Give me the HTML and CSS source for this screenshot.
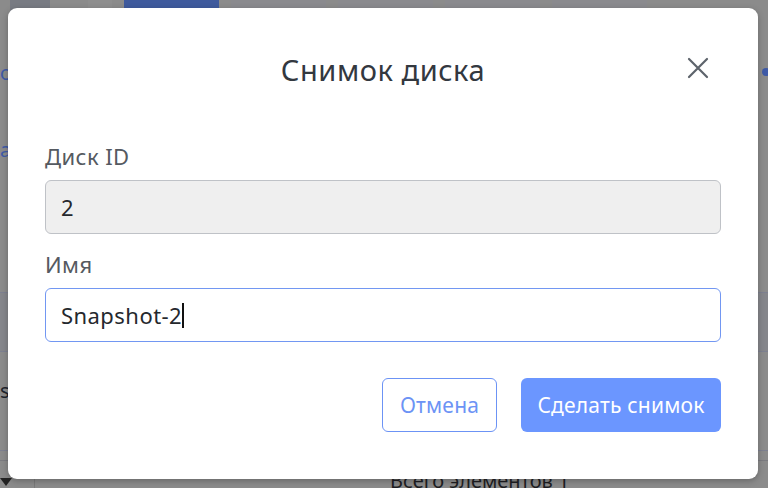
FILE: index.html
```html
<!DOCTYPE html>
<html lang="ru">
<head>
<meta charset="utf-8">
<link rel="stylesheet" href="styles.css">
</head>
<body>
<div class="page">
  <div class="topbar">
    <span class="seg s1"></span><span class="seg s2"></span><span class="seg s3"></span><span class="seg s4"></span><span class="seg s5"></span><span class="seg s6"></span><span class="seg s7"></span><span class="seg s8"></span>
  </div>
  <div class="bg-row r1"><span class="lnk">о</span></div>
  <div class="bg-row r2"><span class="lnk">a</span></div>
  <div class="bg-band"></div>
  <div class="bg-row r3"><span class="dk">s</span></div>
  <div class="bg-line l1"></div>
  <div class="bg-foot"><span class="tri"></span><span class="vline"></span><span class="total">Всего элементов 1</span></div>
  <span class="dot"></span>
</div>
<div class="overlay">
  <div class="modal">
    <div class="modal-head">
      <h2 class="title">Снимок диска</h2>
      <button class="close" aria-label="Закрыть">
        <svg width="22" height="22" viewBox="0 0 22 22"><path d="M2 2L20 20M20 2L2 20" stroke="#5d636b" stroke-width="2.2" stroke-linecap="round" fill="none"/></svg>
      </button>
    </div>
    <div class="field">
      <label class="label">Диск ID</label>
      <div class="input disabled">2</div>
    </div>
    <div class="field">
      <label class="label">Имя</label>
      <div class="input focus">Snapshot-2<span class="caret"></span></div>
    </div>
    <div class="actions">
      <button class="btn outline">Отмена</button>
      <button class="btn primary">Сделать снимок</button>
    </div>
  </div>
</div>
</body>
</html>
```
FILE: styles.css
```css
* { box-sizing: border-box; }
html, body { margin: 0; padding: 0; }
body {
  width: 768px; height: 488px; overflow: hidden;
  font-family: "Noto Sans", "Open Sans", sans-serif;
  background: #8b8b8b;
  position: relative;
}
.page { position: relative; width: 768px; height: 488px; }
.topbar { display: flex; height: 22px; background: #8b8b8b; }
.seg { height: 22px; display: block; }
.s1 { width: 10px; background: #8b8b8b; }
.s2 { width: 40px; background: #787b83; }
.s3 { width: 24px; background: #8e8e8e; margin-left: 38px; }
.s4 { width: 95px; background: #3f5a9d; margin-left: 12px; }
.s5 { width: 95px; background: #8a8a8e; margin-left: 12px; }
.s6 { width: 95px; background: #8a8a8e; margin-left: 12px; }
.s7 { width: 95px; background: #8a8a8e; margin-left: 12px; }
.s8 { width: 95px; background: #8a8a8e; margin-left: 12px; }
.bg-row { position: absolute; left: 0; font-size: 20px; line-height: 28px; }
.r1 { top: 59px; }
.r2 { top: 136px; }
.r3 { top: 377px; }
.lnk { color: #3f5aa6; }
.dk { color: #1e232b; }
.bg-band { position: absolute; left: 0; right: 0; top: 292px; height: 60px; background: #85868b; border-top: 1px solid #7d8090; border-bottom: 1px solid #7d8090; }
.bg-line { position: absolute; left: 0; right: 0; top: 450px; height: 1px; background: #7d8090; }
.bg-foot { position: absolute; left: 0; right: 0; top: 460px; height: 28px; border-top: 1px solid #7b7b80; }
.tri { position: absolute; left: 0; top: 17px; width: 0; height: 0; border-left: 6px solid transparent; border-right: 6px solid transparent; border-top: 8px solid #222; }
.vline { position: absolute; left: 34px; top: 0; width: 1px; height: 28px; background: #7a7a7a; }
.total { position: absolute; left: 390px; top: 6px; font-size: 20px; color: #1e1e22; }
.dot { position: absolute; left: 762px; top: 68px; width: 8px; height: 8px; border-radius: 50%; background: #3f5aa6; }
.overlay { position: absolute; inset: 0; padding: 8px 10px 9px 8px; }
.modal {
  width: 750px; height: 471px; background: #fff; border-radius: 9px;
  box-shadow: 0 2px 6px rgba(0,0,0,0.25);
  padding: 0 37px;
  display: flex; flex-direction: column;
}
.modal-head { position: relative; height: 134px; display: flex; align-items: flex-start; justify-content: center; padding-top: 43px; }
.title { margin: 0; font-weight: 400; font-size: 29px; letter-spacing: 0.55px; color: #33383f; line-height: 38px; }
.close { position: absolute; right: 12px; top: 49px; border: 0; background: none; padding: 0; width: 22px; height: 22px; }
.close svg { display: block; }
.field { display: flex; flex-direction: column; }
.label { font-size: 22px; letter-spacing: 0.45px; color: #555a61; line-height: 28px; margin-bottom: 10px; }
.field + .field { margin-top: 16px; }
.input {
  height: 54px; border: 1px solid #c3c6cc; border-radius: 6px;
  padding: 0 15px; font-size: 22px; letter-spacing: 0.45px; line-height: 52px; color: #25282d;
  display: flex; align-items: center;
}
.input.disabled { background: #efefef; border-color: #bfc2c7; }
.input.focus { border-color: #7297f2; }
.caret { display: inline-block; width: 1.5px; height: 25px; background: #111; margin-left: 0; }
.actions { display: flex; justify-content: flex-end; gap: 24px; margin-top: 36px; }
.btn { height: 54px; border-radius: 6px; font-family: inherit; font-size: 21px; letter-spacing: 0.2px; padding: 0; }
.outline { background: #fff; border: 1px solid #6c93f5; color: #6c93f5; width: 115px; }
.primary { background: #6b96ff; border: 0; color: #fff; width: 200px; }
```
